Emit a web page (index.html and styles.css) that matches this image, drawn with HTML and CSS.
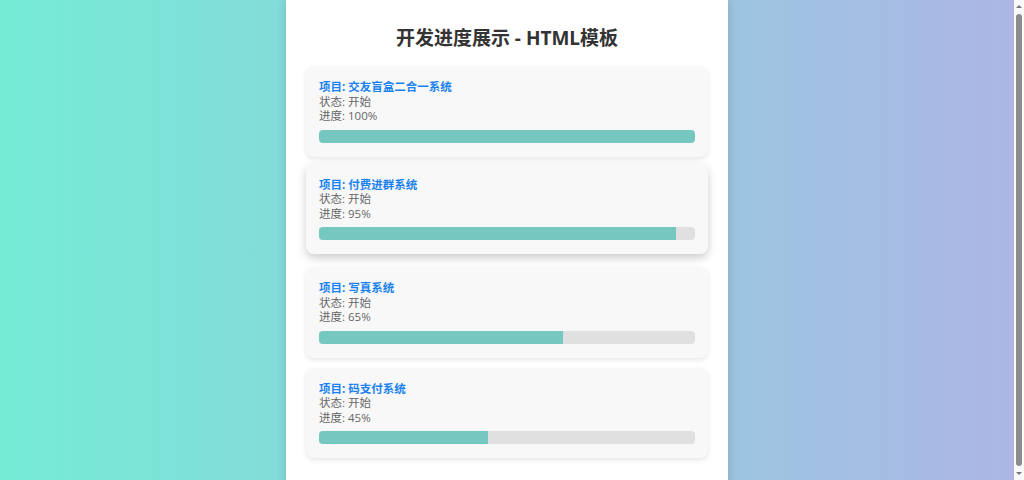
FILE: index.html
```html
<!DOCTYPE html>
<html lang="zh-CN">
<head>
    <meta charset="UTF-8">
    <meta name="viewport" content="width=device-width, initial-scale=1.0">
    <title>开发进度展示 - HTML模板</title>
    <link rel="stylesheet" href="styles.css">
</head>
<body>
    <div class="container">
        <h1>开发进度展示 - HTML模板</h1>

        <div class="project">
            <p class="project-name">项目: 交友盲盒二合一系统</p>
            <p class="project-info">状态: 开始</p>
            <p class="project-info">进度: 100%</p>
            <div class="progress-bar">
                <div class="progress" style="width: 100%"></div>
            </div>
        </div>

        <div class="project active">
            <p class="project-name">项目: 付费进群系统</p>
            <p class="project-info">状态: 开始</p>
            <p class="project-info">进度: 95%</p>
            <div class="progress-bar">
                <div class="progress" style="width: 95%"></div>
            </div>
        </div>

        <div class="project">
            <p class="project-name">项目: 写真系统</p>
            <p class="project-info">状态: 开始</p>
            <p class="project-info">进度: 65%</p>
            <div class="progress-bar">
                <div class="progress" style="width: 65%"></div>
            </div>
        </div>

        <div class="project">
            <p class="project-name">项目: 码支付系统</p>
            <p class="project-info">状态: 开始</p>
            <p class="project-info">进度: 45%</p>
            <div class="progress-bar">
                <div class="progress" style="width: 45%"></div>
            </div>
        </div>
    </div>

    <!-- 右侧滚动条 -->
    <div class="scrollbar">
        <span class="arrow up"></span>
        <span class="thumb"></span>
        <span class="arrow down"></span>
    </div>
</body>
</html>
```

FILE: styles.css
```css
body {
    font-family: "Open Sans", "Noto Sans CJK SC", sans-serif;
    background: linear-gradient(to right, #74ebd5, #acb6e5 99%, #fff 99%);
    margin: 0;
    padding: 0 10px 24px 0;
}

.container {
    width: 442px;
    box-sizing: border-box;
    margin: 0 auto;
    padding: 20px 20px 24px;
    background-color: #fff;
    box-shadow: 0 0 10px rgba(0, 0, 0, 0.15);
}

h1 {
    text-align: center;
    font-size: 19px;
    color: #333;
    margin: 5px 0 15px;
    line-height: 26px;
}

.project {
    background-color: #f8f8f8;
    border-radius: 8px;
    padding: 14px 13px 14px;
    margin-bottom: 10px;
    box-shadow: 0 2px 5px rgba(0, 0, 0, 0.1);
}

/* 鼠标悬停的卡片 */
.project.active {
    transform: translateY(-3px);
    box-shadow: 0 4px 10px rgba(0, 0, 0, 0.2);
}

.project p {
    margin: 0;
    font-size: 11.5px;
    line-height: 14.5px;
}

.project-name {
    color: #1a82f0;
    font-weight: bold;
}

.project-info {
    color: #666;
}

.progress-bar {
    height: 13px;
    background-color: #e0e0e0;
    border-radius: 4px;
    overflow: hidden;
    margin-top: 6px;
}

.progress {
    height: 100%;
    background-color: #76c7c0;
}

.scrollbar {
    position: fixed;
    top: 0;
    right: 0;
    bottom: 0;
    width: 10px;
    background: #fafafa;
    display: flex;
    flex-direction: column;
    align-items: center;
    padding: 5px 0;
    box-sizing: border-box;
}

.scrollbar .thumb {
    flex: 1;
    width: 6px;
    margin: 6px 0;
    background: #8c8c8c;
    border-radius: 3px;
}

.scrollbar .arrow {
    width: 0;
    height: 0;
    border-left: 3px solid transparent;
    border-right: 3px solid transparent;
}

.scrollbar .arrow.up {
    border-bottom: 3px solid #777;
}

.scrollbar .arrow.down {
    border-top: 3px solid #777;
}
```
